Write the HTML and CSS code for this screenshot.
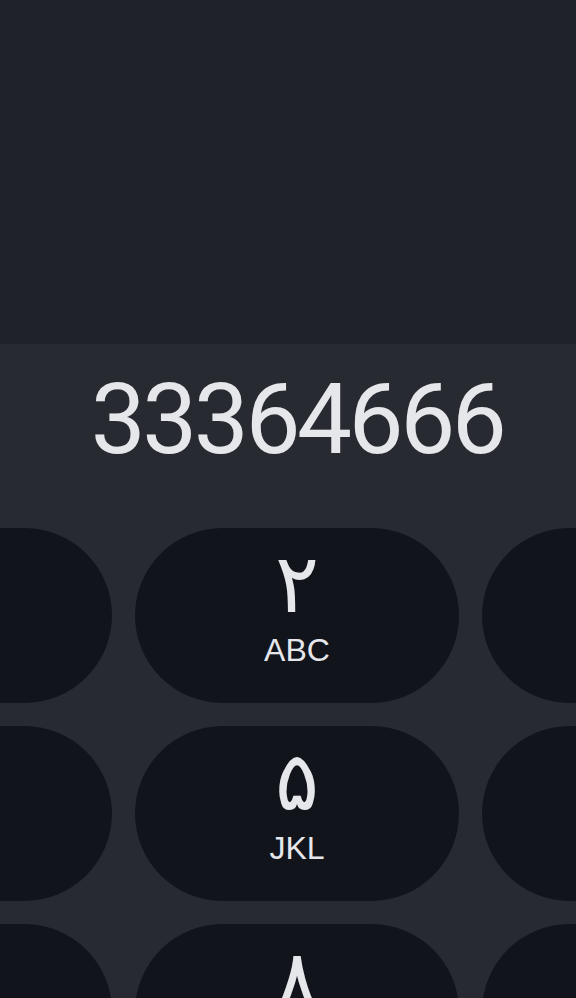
FILE: index.html
```html
<!DOCTYPE html>
<html lang="fa">
<head>
<meta charset="utf-8">
<title>Dialer</title>
<link rel="stylesheet" href="styles.css">
</head>
<body>
<div class="screen">
  <div class="top"></div>
  <div class="panel">
    <div class="display">33364666</div>
    <div class="pad">
      <button class="key"><span class="digit">۱</span><span class="letters">&nbsp;</span></button>
      <button class="key"><span class="digit">۲</span><span class="letters">ABC</span></button>
      <button class="key"><span class="digit">۳</span><span class="letters">DEF</span></button>
      <button class="key"><span class="digit">۴</span><span class="letters">GHI</span></button>
      <button class="key"><span class="digit">۵</span><span class="letters">JKL</span></button>
      <button class="key"><span class="digit">۶</span><span class="letters">MNO</span></button>
      <button class="key"><span class="digit">۷</span><span class="letters">PQRS</span></button>
      <button class="key"><span class="digit">۸</span><span class="letters">TUV</span></button>
      <button class="key"><span class="digit">۹</span><span class="letters">WXYZ</span></button>
    </div>
  </div>
</div>
</body>
</html>
```
FILE: styles.css
```css
html, body {
  margin: 0;
  padding: 0;
  background: #282a31;
}
.screen {
  width: 576px;
  height: 998px;
  overflow: hidden;
  display: flex;
  flex-direction: column;
}
.top {
  height: 344px;
  flex: none;
  background: #1f222a;
}
.panel {
  flex: 1;
  background: #282a31;
  padding-left: 18px;
  display: flex;
  flex-direction: column;
  align-items: center;
}
.display {
  margin-top: 22px;
  height: 162px;
  font-family: Roboto, "Noto Sans", sans-serif;
  font-weight: 400;
  font-size: 98px;
  line-height: 108px;
  letter-spacing: -3.5px;
  color: #e5e7eb;
  text-align: center;
}
.pad {
  display: grid;
  grid-template-columns: repeat(3, 324px);
  grid-auto-rows: 175px;
  gap: 23px;
  justify-content: center;
  width: 558px;
}
.key {
  border: none;
  margin: 0;
  padding: 0 0 27px;
  border-radius: 9999px;
  background: #11141b;
  color: #e5e7eb;
  display: flex;
  flex-direction: column;
  align-items: center;
  justify-content: center;
}
.digit {
  display: block;
  font-family: "DejaVu Sans", sans-serif;
  font-size: 82px;
  line-height: 96px;
}
.letters {
  display: block;
  font-family: "Liberation Sans", Arial, sans-serif;
  font-size: 32px;
  line-height: 36px;
}
```
